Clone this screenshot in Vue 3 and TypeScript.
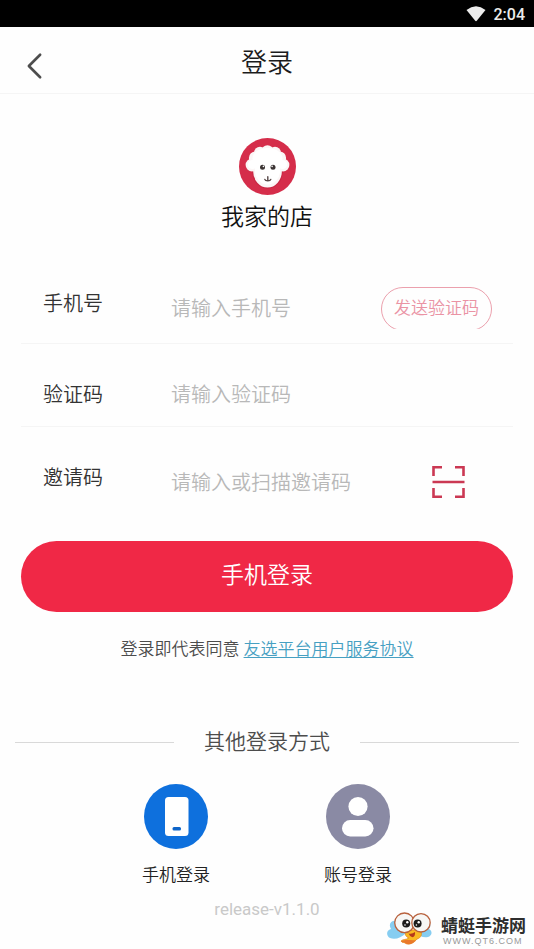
<script setup lang="ts">
import { computed, ref } from 'vue'

const phone = ref('')
const code = ref('')
const invite = ref('')
const canSend = computed(() => phone.value.length === 11)
</script>

<template>
  <div class="page">
    <div class="status">
      <svg class="wifi" viewBox="0 0 20 16" aria-hidden="true">
        <path d="M0.5 4 Q10 -3.4 19.5 4 L11 14.6 Q10 15.8 9 14.6 Z" fill="#ececec" />
      </svg>
      <span class="clock">2:04</span>
    </div>

    <header class="bar">
      <button class="back" type="button" aria-label="返回">
        <svg viewBox="0 0 16 28" aria-hidden="true">
          <path d="M14 2 L2 14 L14 26" fill="none" stroke="#4d4d4d" stroke-width="2.8" stroke-linecap="round" stroke-linejoin="round" />
        </svg>
      </button>
      <h1 class="title">登录</h1>
    </header>

    <main class="content">
      <section class="shop">
        <svg class="logo" viewBox="0 0 57 57" aria-hidden="true">
          <circle cx="28.5" cy="28.5" r="28.5" fill="#d52d4a" />
          <ellipse cx="28.5" cy="34" rx="15.2" ry="16.7" fill="#b9203b" opacity=".45" />
          <g fill="#fbf6f6">
            <circle cx="13" cy="27" r="6.4" />
            <circle cx="44" cy="27" r="6.4" />
            <circle cx="16.5" cy="20" r="6.6" />
            <circle cx="40.5" cy="20" r="6.6" />
            <circle cx="21" cy="14.8" r="6" />
            <circle cx="36" cy="14.8" r="6" />
            <circle cx="28.5" cy="13.4" r="6.2" />
            <ellipse cx="28.5" cy="33" rx="14.4" ry="16.5" />
          </g>
          <g fill="#fff">
            <ellipse cx="28.5" cy="20.5" rx="15" ry="10.5" />
            <ellipse cx="28.5" cy="32" rx="12.6" ry="14.6" />
            <circle cx="13.5" cy="26.5" r="4.6" />
            <circle cx="43.5" cy="26.5" r="4.6" />
          </g>
          <circle cx="23.5" cy="29.3" r="2.5" fill="#3c3534" />
          <circle cx="34" cy="29.3" r="2.5" fill="#3c3534" />
          <circle cx="24.4" cy="28.4" r=".8" fill="#fff" />
          <circle cx="33.1" cy="28.4" r=".8" fill="#fff" />
          <path d="M28.8 38.8 V42.5 M25.8 41.4 Q26.2 42.8 28.8 42.8 Q31.4 42.8 31.8 41.4" fill="none" stroke="#574747" stroke-width="1.4" stroke-linecap="round" />
        </svg>
        <p class="name">我家的店</p>
      </section>

      <form class="form" @submit.prevent>
        <div class="row first">
          <label class="raised" for="phone">手机号</label>
          <input id="phone" v-model="phone" type="tel" placeholder="请输入手机号" />
          <span class="send-clip">
            <button class="send" :class="{ ready: canSend }" type="button">发送验证码</button>
          </span>
        </div>
        <div class="row second">
          <label for="code">验证码</label>
          <input id="code" v-model="code" type="text" placeholder="请输入验证码" />
        </div>
        <div class="row third">
          <label class="raised" for="invite">邀请码</label>
          <input id="invite" v-model="invite" type="text" placeholder="请输入或扫描邀请码" />
          <button class="scan" type="button" aria-label="扫描">
            <svg viewBox="0 0 33 32" aria-hidden="true">
              <path d="M10 1.3 H1.5 V10 M23 1.3 H31.5 V10 M10 30.7 H1.5 V22 M23 30.7 H31.5 V22" fill="none" stroke="#cb3853" stroke-width="2.6" />
              <path d="M0.5 16 H32.5" stroke="#cb3853" stroke-width="2.6" />
            </svg>
          </button>
        </div>
        <button class="submit" type="submit">手机登录</button>
      </form>

      <p class="terms">登录即代表同意 <a href="#terms">友选平台用户服务协议</a></p>

      <section class="other">
        <h2 class="divider"><span>其他登录方式</span></h2>
        <div class="methods">
          <button class="method" type="button">
            <svg viewBox="0 0 64 65" aria-hidden="true">
              <ellipse cx="32" cy="32.5" rx="32" ry="32.5" fill="#0e70dd" />
              <rect x="21" y="13" width="23.5" height="39" rx="3.5" fill="#fff" />
              <rect x="28.5" y="43" width="8.5" height="3.4" rx="1.5" fill="#0e65c9" />
            </svg>
            <span>手机登录</span>
          </button>
          <button class="method" type="button">
            <svg viewBox="0 0 64 65" aria-hidden="true">
              <ellipse cx="32" cy="32.5" rx="32" ry="32.5" fill="#8a8aa4" />
              <circle cx="32" cy="22.5" r="9.6" fill="#fff" />
              <rect x="16" y="36" width="31.5" height="16.5" rx="8.2" fill="#fff" />
            </svg>
            <span>账号登录</span>
          </button>
        </div>
      </section>

      <p class="release">release-v1.1.0</p>
    </main>

    <aside class="mark">
      <svg class="mascot" viewBox="0 0 46 34" aria-hidden="true">
        <path d="M10 9 C4 8 1 12 4 17 C-1 18 -1 24 3 26 C8 28 14 26 19 21 Z" fill="#86cdf1" />
        <path d="M38 9 C43 9 45 13 42 17 C46 19 45 24 41 25 C36 26 32 24 29 20 Z" fill="#86cdf1" />
        <path d="M19 18 C17 22 19 25 22 26 C19 28 16 27 14 29 C15 31 17 30 18 31 C22 34 28 30 30 27 C34 26 36 22 33 18 Z" fill="#f9b922" stroke="#e58a24" stroke-width=".8" />
        <path d="M14 29 C15 31 17 30 18 31 C22 34 27 31 29 28 C25 29 20 27 14 29 Z" fill="#e9782a" />
        <circle cx="17.5" cy="10.8" r="9.8" fill="#f7f7f5" stroke="#b8613d" stroke-width="1.3" />
        <circle cx="34" cy="10.8" r="9.2" fill="#f7f7f5" stroke="#b8613d" stroke-width="1.3" />
        <circle cx="19.2" cy="11.6" r="4" fill="#1b1b1b" />
        <circle cx="30.6" cy="11.6" r="4" fill="#1b1b1b" />
        <circle cx="20.3" cy="10.2" r="1.2" fill="#fff" />
        <circle cx="31.7" cy="10.2" r="1.2" fill="#fff" />
        <circle cx="18" cy="13" r=".8" fill="#fff" />
        <circle cx="29.4" cy="13" r=".8" fill="#fff" />
        <path d="M21.5 21.5 Q25 22.5 28 20 Q28.4 24.8 25.4 25.2 Q22.8 24.8 21.5 21.5 Z" fill="#b5391c" />
      </svg>
      <div class="mark-text">
        <strong>蜻蜓手游网</strong>
        <span>WWW.QT6.COM</span>
      </div>
    </aside>
  </div>
</template>

<style>
body {
  background: #fefefe;
}
</style>

<style scoped>
.page {
  position: relative;
  min-height: 100vh;
  overflow: hidden;
  box-sizing: border-box;
  font-family: Roboto, "Noto Sans CJK SC", sans-serif;
  font-weight: 350;
  color: #333;
}
.page * {
  box-sizing: border-box;
}
h1,
h2,
p {
  margin: 0;
  font-weight: inherit;
}
button {
  padding: 0;
  border: 0;
  background: none;
  font-family: inherit;
  font-weight: inherit;
  color: inherit;
  cursor: pointer;
}
svg {
  display: block;
}
.status {
  display: flex;
  align-items: center;
  justify-content: flex-end;
  gap: 8px;
  height: 27px;
  padding-right: 9px;
  background: #000;
}
.wifi {
  width: 20px;
  height: 16px;
}
.clock {
  padding-top: 2px;
  font-size: 16px;
  line-height: 20px;
  font-weight: 500;
  color: #ececec;
}
.bar {
  display: grid;
  grid-template-columns: 56px 1fr 56px;
  align-items: center;
  height: 67px;
  border-bottom: 1px solid #f5f5f5;
}
.back {
  padding: 12px 14px 0 27px;
}
.back svg {
  width: 15px;
  height: 28px;
}
.title {
  font-size: 26px;
  line-height: 36px;
  padding-top: 6px;
  text-align: center;
  color: #1c1c1c;
}
.shop {
  display: flex;
  flex-direction: column;
  align-items: center;
  gap: 6px;
  padding-top: 44px;
}
.logo {
  width: 57px;
  height: 57px;
}
.name {
  font-size: 23px;
  line-height: 34px;
  color: #111;
}
.form {
  margin: 20px 21px 0;
}
.row {
  display: grid;
  grid-template-columns: 128px 1fr auto;
  align-items: center;
  padding: 17px 21px 0 22px;
  border-bottom: 1px solid #f5f5f5;
}
.first {
  height: 89px;
}
.second {
  height: 83px;
}
.third {
  height: 92px;
  border-bottom: 0;
}
.row label {
  padding-top: 2px;
  font-size: 20px;
  line-height: 28px;
  color: #333;
}
.row .raised {
  padding: 0 0 8px;
}
.row input {
  width: 100%;
  min-width: 0;
  height: 40px;
  padding: 2px 0 0;
  border: 0;
  outline: 0;
  background: none;
  font-family: inherit;
  font-weight: inherit;
  font-size: 20px;
  color: #333;
}
.row input::placeholder {
  color: #b8b8b8;
  opacity: 1;
}
.send-clip {
  height: 42px;
  overflow: hidden;
}
.send {
  height: 44px;
  padding: 0 12px 2px;
  border: 1px solid #eba0ad;
  border-radius: 22px;
  font-size: 17px;
  line-height: 24px;
  color: #ea93a4;
}
.send.ready {
  border-color: #f02846;
  color: #f02846;
}
.scan {
  margin-right: 27px;
}
.scan svg {
  width: 33px;
  height: 32px;
}
.submit {
  display: block;
  width: 100%;
  height: 71px;
  margin-top: 22px;
  padding-bottom: 2px;
  border-radius: 36px;
  background: #f02846;
  font-size: 23px;
  line-height: 34px;
  color: #fff;
}
.terms {
  margin-top: 24px;
  font-size: 17px;
  line-height: 26px;
  text-align: center;
  color: #4c4c4c;
}
.terms a {
  color: #46a0c2;
  text-underline-offset: 2px;
}
.other {
  padding: 65px 15px 0;
}
.divider {
  display: flex;
  align-items: center;
  gap: 30px;
  font-size: 21px;
  line-height: 30px;
  color: #4c4c4c;
}
.divider::before,
.divider::after {
  content: "";
  flex: 1;
  height: 1px;
  background: #d9d9d9;
}
.methods {
  display: grid;
  grid-template-columns: 1fr 1fr;
  padding: 27px 70px 0;
}
.method {
  display: flex;
  flex-direction: column;
  align-items: center;
  gap: 13px;
  font-size: 17px;
  line-height: 26px;
  color: #222;
}
.method svg {
  width: 64px;
  height: 65px;
}
.release {
  padding-top: 11px;
  font-size: 17px;
  line-height: 20px;
  font-weight: 400;
  text-align: center;
  color: #c9c9c9;
}
.mark {
  position: absolute;
  right: 8px;
  bottom: 3px;
  display: flex;
  align-items: center;
  gap: 8px;
}
.mascot {
  width: 46px;
  height: 34px;
}
.mark-text {
  display: flex;
  flex-direction: column;
  padding-top: 3px;
}
.mark-text strong {
  font-size: 17px;
  line-height: 20px;
  font-weight: 700;
  color: #2e2e2e;
}
.mark-text span {
  padding-left: 2px;
  font-family: "Liberation Sans", sans-serif;
  font-size: 9px;
  line-height: 10px;
  letter-spacing: 1px;
  font-weight: 400;
  color: #999;
}
</style>
